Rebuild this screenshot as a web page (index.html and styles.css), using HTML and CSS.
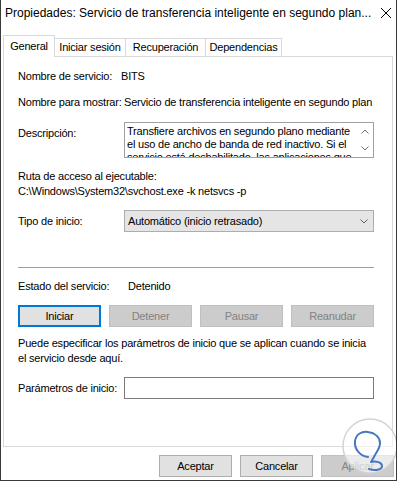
FILE: index.html
```html
<!DOCTYPE html>
<html lang="es">
<head>
  <meta charset="UTF-8">
  <meta name="viewport" content="width=device-width, initial-scale=1.0">
  <title>Propiedades: BITS</title>
  <link rel="stylesheet" href="styles.css">
</head>
<body>
  <div class="window">
    <div class="titlebar">
      <span class="title">Propiedades: Servicio de transferencia inteligente en segundo plan...</span>
      <svg class="close" width="12" height="12" viewBox="0 0 12 12"><path d="M1 1L11 11M11 1L1 11" stroke="#000" stroke-width="1"/></svg>
    </div>

    <div class="tabs">
      <div class="tab tab-general selected">General</div>
      <div class="tab tab-logon">Iniciar sesión</div>
      <div class="tab tab-recovery">Recuperación</div>
      <div class="tab tab-deps">Dependencias</div>
    </div>

    <div class="panel">
      <div class="field row-name">
        <span class="label">Nombre de servicio:</span>
        <span class="value bits">BITS</span>
      </div>
      <div class="field row-display">
        <span class="label">Nombre para mostrar:</span>
        <span class="value">Servicio de transferencia inteligente en segundo plan</span>
      </div>
      <div class="field row-desc">
        <span class="label desc-label">Descripción:</span>
        <div class="desc-box">
          <p class="desc-text">Transfiere archivos en segundo plano mediante<br>el uso de ancho de banda de red inactivo. Si el<br>servicio está deshabilitado, las aplicaciones que</p>
          <div class="scroll">
            <svg width="8" height="5" viewBox="0 0 8 5"><path d="M0.5 4.5L4 1L7.5 4.5" fill="none" stroke="#707070"/></svg>
            <svg width="8" height="5" viewBox="0 0 8 5"><path d="M0.5 0.5L4 4L7.5 0.5" fill="none" stroke="#707070"/></svg>
          </div>
        </div>
      </div>
      <div class="path-label">Ruta de acceso al ejecutable:</div>
      <div class="path">C:\Windows\System32\svchost.exe -k netsvcs -p</div>
      <div class="field row-startup">
        <span class="label">Tipo de inicio:</span>
        <div class="combo">
          <span>Automático (inicio retrasado)</span>
          <svg width="8" height="5" viewBox="0 0 8 5"><path d="M0.5 0.5L4 4L7.5 0.5" fill="none" stroke="#606060"/></svg>
        </div>
      </div>
      <div class="separator"></div>
      <div class="field row-status">
        <span class="label">Estado del servicio:</span>
        <span class="value status">Detenido</span>
      </div>
      <div class="actions">
        <button class="btn focused">Iniciar</button>
        <button class="btn disabled">Detener</button>
        <button class="btn disabled">Pausar</button>
        <button class="btn disabled">Reanudar</button>
      </div>
      <p class="hint">Puede especificar los parámetros de inicio que se aplican cuando se inicia<br>el servicio desde aquí.</p>
      <div class="field row-params">
        <span class="label">Parámetros de inicio:</span>
        <div class="input"></div>
      </div>
    </div>

    <div class="footer">
      <button class="btn">Aceptar</button>
      <button class="btn">Cancelar</button>
      <button class="btn disabled">Aplicar</button>
    </div>

    <svg class="watermark" width="57" height="62" viewBox="0 0 57 62">
      <circle cx="30" cy="30" r="27" fill="#ffffff" fill-opacity="0.6" stroke="#d4d4d4" stroke-width="1.5"/>
      <path d="M28 41 C20 40 14 33 15 25 C16 18 22 15 28 16 C35 17 40 21 40 27 C40 33 36 36 34 41 L31 46 C36 45 42 46 42 50 C42 54 35 55 29 53" fill="none" stroke="#4777bd" stroke-width="2" stroke-linecap="round" stroke-linejoin="round"/>
    </svg>
  </div>
</body>
</html>
```

FILE: styles.css
```css
* {
  box-sizing: border-box;
}

body {
  margin: 0;
  background: #fff;
  font-family: "Liberation Sans", Arial, sans-serif;
  font-size: 11px;
  letter-spacing: -0.2px;
  color: #000;
}

.window {
  position: relative;
  width: 397px;
  height: 481px;
  border: 1px solid #3a3a3a;
  border-top: none;
  overflow: hidden;
  background: #fff;
}

/* title bar */
.titlebar {
  height: 35px;
  display: flex;
  justify-content: space-between;
  align-items: flex-start;
  padding: 5px 0 0 4px;
}

.title {
  font-size: 12px;
  line-height: 16px;
  letter-spacing: 0;
  white-space: nowrap;
}

.close {
  margin: 2px 4px 0 0;
}

/* tabs */
.tabs {
  display: flex;
  align-items: flex-end;
  height: 21px;
  padding-left: 2px;
}

.tab {
  height: 18px;
  line-height: 17px;
  text-align: center;
  border: 1px solid #d9d9d9;
  border-bottom: none;
  margin-left: -1px;
  background: #fff;
}

.tab:first-child {
  margin-left: 0;
}

.tab.selected {
  height: 22px;
  line-height: 20px;
  margin-bottom: -1px;
  position: relative;
  z-index: 1;
}

.tab-general { width: 52px; }
.tab-logon { width: 72px; }
.tab-recovery { width: 81px; }
.tab-deps { width: 77px; }

/* page */
.panel {
  margin-left: 2px;
  width: 390px;
  height: 391px;
  border: 1px solid #d9d9d9;
  padding: 0 18px 0 14px;
}

.field {
  display: grid;
  grid-template-columns: 106px 1fr;
  align-items: center;
  line-height: 16px;
}

.value {
  white-space: nowrap;
}

.bits {
  margin-left: -3px;
}

.row-name { margin-top: 11px; }
.row-display { margin-top: 10px; }

.row-desc {
  margin-top: 12px;
  align-items: start;
}

.desc-label {
  padding-top: 3px;
}

.desc-box {
  height: 36px;
  border: 1px solid #a0a0a0;
  display: flex;
  overflow: hidden;
}

.desc-text {
  flex: 1;
  margin: 0;
  padding: 2px 0 0 2px;
  line-height: 13px;
  white-space: nowrap;
  overflow: hidden;
}

.scroll {
  width: 17px;
  display: flex;
  flex-direction: column;
  align-items: center;
  justify-content: space-between;
  padding: 6px 0 6px;
}

.scroll svg {
  display: block;
}

.path-label {
  margin-top: 11px;
  line-height: 15px;
}

.path {
  line-height: 15px;
  white-space: nowrap;
}

.row-startup {
  margin-top: 11px;
}

.combo {
  height: 22px;
  border: 1px solid #adadad;
  background: #e5e5e5;
  display: flex;
  align-items: center;
  justify-content: space-between;
  padding: 0 5px 0 3px;
}

.combo svg {
  display: block;
}

.separator {
  margin-top: 35px;
  height: 1px;
  background: #a0a0a0;
}

.row-status {
  margin-top: 10px;
}

.status {
  padding-left: 4px;
}

/* buttons */
.btn {
  font-family: inherit;
  font-size: 11px;
  letter-spacing: -0.2px;
  color: #000;
  height: 22px;
  padding: 0;
  border: 1px solid #adadad;
  background: #e1e1e1;
  border-radius: 0;
}

.btn.focused {
  border: 2px solid #0078d7;
}

.btn.disabled {
  background: #cccccc;
  border-color: #bfbfbf;
  color: #838383;
}

.actions {
  margin-top: 11px;
  display: grid;
  grid-template-columns: repeat(4, 1fr);
  gap: 8px;
}

.hint {
  margin: 9px 0 0;
  line-height: 15px;
  white-space: nowrap;
}

.row-params {
  margin-top: 11px;
}

.input {
  height: 22px;
  border: 1px solid #7a7a7a;
  background: #fff;
}

.footer {
  display: flex;
  justify-content: flex-end;
  gap: 8px;
  margin-top: 8px;
  padding-right: 2px;
}

.footer .btn {
  width: 73px;
}

/* watermark logo over the corner */
.watermark {
  position: absolute;
  left: 339px;
  top: 416px;
}
```
